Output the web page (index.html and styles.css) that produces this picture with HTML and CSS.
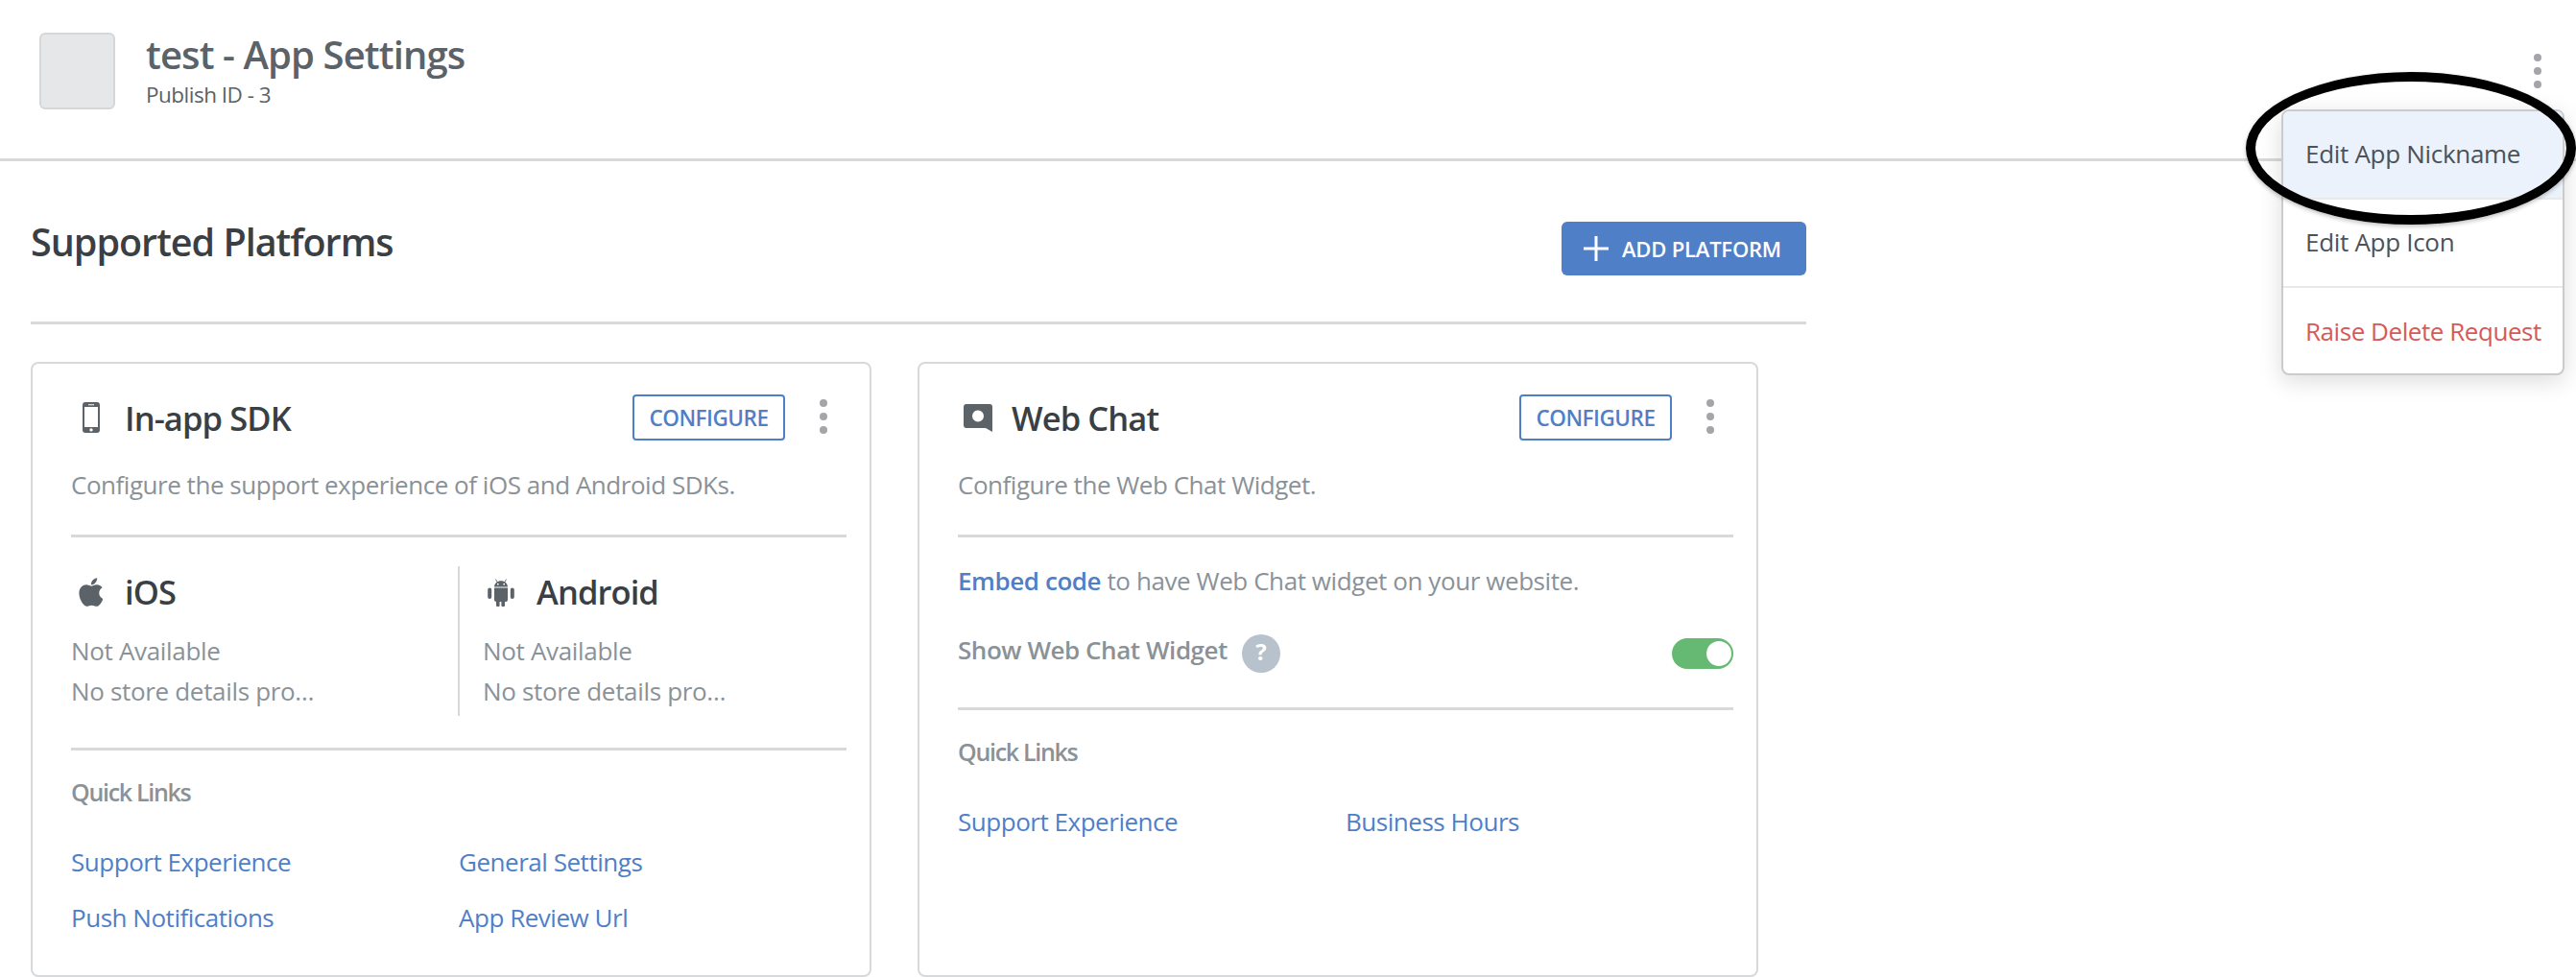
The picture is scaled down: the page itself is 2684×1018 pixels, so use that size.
FILE: index.html
```html
<!DOCTYPE html>
<html lang="en">
<head>
    <meta charset="UTF-8">
    <title>App Settings</title>
    <link rel="stylesheet" href="styles.css">
</head>
<body>
    <header class="page-header">
        <div class="app-icon"></div>
        <div class="app-info">
            <h1>test - App Settings</h1>
            <div class="publish-id">Publish ID - 3</div>
        </div>
        <div class="dots dots-page"><i></i><i></i><i></i></div>
    </header>

    <main class="content">
        <div class="section-head">
            <h2>Supported Platforms</h2>
            <button class="add-button">
                <svg class="plus" viewBox="0 0 26 26"><path d="M13 0v26M0 13h26" stroke="#fff" stroke-width="3" fill="none"/></svg>
                ADD PLATFORM
            </button>
        </div>

        <div class="cards">
            <section class="card">
                <div class="card-head">
                    <svg class="card-icon" viewBox="0 0 18 32"><path fill="#5b6268" fill-rule="evenodd" d="M3 0h12a3 3 0 0 1 3 3v26a3 3 0 0 1-3 3H3a3 3 0 0 1-3-3V3a3 3 0 0 1 3-3zM2 5v21h14V5zM6 2.2v1h6v-1zM9 27.2a1.7 1.7 0 1 0 0 3.4 1.7 1.7 0 0 0 0-3.4z"/></svg>
                    <h3>In-app SDK</h3>
                    <button class="configure">CONFIGURE</button>
                    <div class="dots"><i></i><i></i><i></i></div>
                </div>
                <p class="card-desc">Configure the support experience of iOS and Android SDKs.</p>
                <hr>
                <div class="platforms">
                    <div class="platform">
                        <div class="platform-name">
                            <svg class="os-icon" viewBox="0 30 372 452"><path fill="#5b6268" d="M318.7 268.7c-.2-36.7 16.4-64.4 50-84.8-18.8-26.9-47.2-41.7-84.7-44.6-35.5-2.8-74.3 20.7-88.5 20.7-15 0-49.4-19.7-76.4-19.7C63.3 141.2 4 184.8 4 273.5q0 39.3 14.4 81.2c12.8 36.7 59 126.7 107.2 125.2 25.2-.6 43-17.9 75.8-17.9 31.8 0 48.3 17.9 76.4 17.9 48.6-.7 90.4-82.5 102.6-119.3-65.2-30.7-61.7-90-61.7-91.9zm-56.6-164.2c27.3-32.4 24.8-61.9 24-72.5-24.1 1.4-52 16.4-67.9 34.9-17.5 19.8-27.8 44.3-25.6 71.9 26.1 2 49.9-11.4 69.5-34.3z"/></svg>
                            iOS
                        </div>
                        <div class="muted">Not Available</div>
                        <div class="muted">No store details pro…</div>
                    </div>
                    <div class="platform platform-right">
                        <div class="platform-name">
                            <svg class="os-icon" viewBox="0 0 28 30"><path fill="#5b6268" d="M7 10.5h14V23a2 2 0 0 1-2 2h-1v3.5a1.8 1.8 0 0 1-3.600 0V25h-1.800v3.500a1.800 1.800 0 0 1-3.600 0V25H9a2 2 0 0 1-2-2zM7 9.500C7.200 5.800 10 3.200 14 3.200s6.800 2.600 7 6.300zM10.800 5.800a.9.9 0 1 0 0 1.800.9.900 0 0 0 0-1.800zM17.200 5.800a.9.9 0 1 0 0 1.800.9.900 0 0 0 0-1.800zM2.200 10.500A2 2 0 0 1 4.200 12.500v7.500a2 2 0 0 1-4 0v-7.500a2 2 0 0 1 2-2zM25.800 10.500a2 2 0 0 1 2 2v7.500a2 2 0 0 1-4 0v-7.500a2 2 0 0 1 2-2z"/><path stroke="#5b6268" stroke-width=".8" d="M10 4.500 8.500 1.500M18 4.500l1.500-3"/></svg>
                            Android
                        </div>
                        <div class="muted">Not Available</div>
                        <div class="muted">No store details pro…</div>
                    </div>
                </div>
                <hr>
                <div class="quick-title">Quick Links</div>
                <div class="quick-links">
                    <a href="#">Support Experience</a>
                    <a href="#">General Settings</a>
                    <a href="#">Push Notifications</a>
                    <a href="#">App Review Url</a>
                </div>
            </section>

            <section class="card">
                <div class="card-head">
                    <svg class="card-icon card-icon-chat" viewBox="0 0 30 29"><path fill="#5b6268" fill-rule="evenodd" d="M3 0h24a3 3 0 0 1 3 3v26l-7-4H3a3 3 0 0 1-3-3V3a3 3 0 0 1 3-3zM15 6.500a6 6 0 1 0 0 12 6 6 0 0 0 0-12z"/></svg>
                    <h3>Web Chat</h3>
                    <button class="configure">CONFIGURE</button>
                    <div class="dots"><i></i><i></i><i></i></div>
                </div>
                <p class="card-desc">Configure the Web Chat Widget.</p>
                <hr>
                <p class="embed"><a href="#" class="embed-link">Embed code</a> to have Web Chat widget on your website.</p>
                <div class="widget-row">
                    <span class="widget-label">Show Web Chat Widget</span>
                    <span class="help">?</span>
                    <span class="toggle"></span>
                </div>
                <hr>
                <div class="quick-title">Quick Links</div>
                <div class="quick-links">
                    <a href="#">Support Experience</a>
                    <a href="#">Business Hours</a>
                </div>
            </section>
        </div>
    </main>

    <div class="menu-caret"></div>
    <div class="menu">
        <div class="menu-item menu-item-active">Edit App Nickname</div>
        <div class="menu-item">Edit App Icon</div>
        <div class="menu-item menu-item-danger">Raise Delete Request</div>
    </div>
    <div class="highlight-ring"></div>
</body>
</html>
```

FILE: styles.css
```css
* {
    box-sizing: border-box;
}
html, body {
    height: 1018px;
    overflow: hidden;
}
body {
    margin: 0;
    background-color: #fff;
    font-family: "Open Sans", "Noto Sans", sans-serif;
    color: #3a3f44;
    position: relative;
}
h1, h2, h3, p {
    margin: 0;
}
hr {
    border: none;
    height: 3px;
    margin: 0;
    background-color: #d8d9da;
}

/* page header */
.page-header {
    height: 168px;
    border-bottom: 3px solid #d8d9da;
    padding: 34px 0 0 41px;
    display: flex;
    align-items: flex-start;
}
.app-icon {
    width: 79px;
    height: 80px;
    background-color: #e6e7e9;
    border: 2px solid #d6d7d8;
    border-radius: 6px;
}
.app-info {
    margin-left: 32px;
}
.app-info h1 {
    font-size: 40px;
    line-height: 46px;
    font-weight: 600;
    color: #5b6268;
    letter-spacing: -0.9px;
}
.publish-id {
    font-size: 22.5px;
    line-height: 28px;
    margin-top: 5px;
    color: #5b6268;
    letter-spacing: -0.5px;
}
.dots {
    display: flex;
    flex-direction: column;
    gap: 6px;
    width: 8px;
}
.dots i {
    display: block;
    width: 8px;
    height: 8px;
    border-radius: 50%;
    background-color: #a3a5a8;
}
.dots-page {
    margin-left: auto;
    margin-right: 36px;
    margin-top: 22px;
}

/* platforms section */
.content {
    width: 1850px;
    margin-left: 32px;
}
.section-head {
    height: 170px;
    border-bottom: 3px solid #d8d9da;
    display: flex;
    justify-content: space-between;
    padding-top: 60px;
}
.section-head h2 {
    font-size: 39.5px;
    line-height: 48px;
    font-weight: 600;
    color: #3a3f44;
    letter-spacing: -1px;
}
.add-button {
    width: 255px;
    height: 56px;
    margin-top: 3px;
    background-color: #4f7fc7;
    border: none;
    border-radius: 6px;
    color: #fff;
    font-family: inherit;
    font-size: 22px;
    font-weight: 600;
    letter-spacing: -0.2px;
    display: flex;
    align-items: center;
    padding-left: 23px;
    gap: 14px;
}
.plus {
    width: 26px;
    height: 26px;
}
.cards {
    display: flex;
    gap: 48px;
    margin-top: 39px;
}
.card {
    width: 876px;
    height: 641px;
    border: 2px solid #d8d9da;
    border-radius: 8px;
    padding: 32px 24px 0 40px;
}
.card-head {
    height: 48px;
    display: flex;
    align-items: center;
}
.card-icon {
    width: 18px;
    height: 32px;
    margin-left: 12px;
    margin-right: 26px;
}
.card-icon-chat {
    width: 30px;
    height: 29px;
    margin-left: 6px;
    margin-right: 20px;
}
.card-head h3 {
    font-size: 34.5px;
    font-weight: 600;
    color: #3a3f44;
    letter-spacing: -0.9px;
}
.configure {
    margin-left: auto;
    width: 159px;
    height: 48px;
    background-color: #fff;
    border: 2px solid #4f7fc7;
    border-radius: 4px;
    color: #4f7fc7;
    font-family: inherit;
    font-size: 22.5px;
    font-weight: 600;
    letter-spacing: -0.5px;
    padding: 0;
}
.card-head .dots {
    margin-left: 36px;
    margin-right: 20px;
    margin-top: -2px;
}
.card-desc {
    font-size: 26px;
    line-height: 36px;
    margin-top: 28px;
    margin-bottom: 34px;
    color: #8a9298;
    letter-spacing: -0.47px;
}
.platforms {
    display: flex;
    padding-top: 30px;
    height: 219px;
}
.platform {
    width: 403px;
    height: 156px;
}
.platform-right {
    border-left: 2px solid #d8d9da;
    padding-left: 24px;
}
.platform-name {
    font-size: 34.5px;
    line-height: 42px;
    font-weight: 600;
    color: #3a3f44;
    letter-spacing: -0.9px;
    display: flex;
    align-items: center;
    margin-top: 6px;
    margin-bottom: 19px;
}
.os-icon {
    width: 25px;
    height: 30px;
    margin-left: 8px;
    margin-right: 23px;
}
.platform-right .os-icon {
    width: 28px;
    margin-left: 5px;
    margin-right: 23px;
}
.muted {
    font-size: 26px;
    line-height: 42px;
    color: #8a9298;
    letter-spacing: -0.33px;
}
.quick-title {
    font-size: 25px;
    font-weight: 600;
    line-height: 36px;
    margin-top: 25px;
    color: #8a9298;
    letter-spacing: -1.3px;
}
.quick-links {
    display: grid;
    grid-template-columns: 404px 404px;
    grid-auto-rows: 58px;
    margin-top: 37px;
}
.quick-links a {
    font-size: 26px;
    line-height: 36px;
    color: #4f7fc7;
    text-decoration: none;
    letter-spacing: -0.47px;
}

/* web chat card */
.embed {
    font-size: 26px;
    line-height: 36px;
    margin-top: 27px;
    color: #8a9298;
    letter-spacing: -0.42px;
}
.embed-link {
    color: #4f7fc7;
    font-weight: 600;
    text-decoration: none;
}
.widget-row {
    display: flex;
    align-items: center;
    height: 40px;
    margin-top: 38px;
    margin-bottom: 36px;
}
.widget-label {
    font-size: 26px;
    font-weight: 600;
    color: #8a9298;
    letter-spacing: -0.45px;
    margin-top: -9px;
}
.help {
    width: 40px;
    height: 40px;
    margin-left: 15px;
    border-radius: 50%;
    background-color: #b8c2cc;
    color: #fff;
    font-size: 24px;
    font-weight: 700;
    text-align: center;
    line-height: 36px;
}
.toggle {
    margin-left: auto;
    width: 64px;
    height: 32px;
    border-radius: 16px;
    background-color: #66b973;
    position: relative;
}
.toggle::after {
    content: "";
    position: absolute;
    right: 2px;
    top: 3px;
    width: 26px;
    height: 26px;
    border-radius: 50%;
    background-color: #fff;
}

/* dropdown + annotation */
.menu {
    position: absolute;
    left: 2377px;
    top: 114px;
    width: 295px;
    height: 277px;
    background-color: #fff;
    border: 2px solid #c9cbcd;
    border-radius: 8px;
    box-shadow: 0 6px 24px rgba(0,0,0,0.14);
    overflow: hidden;
}
.menu-caret {
    position: absolute;
    left: 2636px;
    top: 107px;
    width: 16px;
    height: 16px;
    background-color: #fff;
    transform: rotate(45deg);
}
.menu-item {
    height: 92px;
    padding-left: 23px;
    padding-bottom: 2px;
    display: flex;
    align-items: center;
    font-size: 26px;
    color: #4c5258;
    letter-spacing: -0.3px;
    border-bottom: 2px solid #e8e9ea;
}
.menu-item:last-child {
    border-bottom: none;
}
.menu-item-active {
    background-color: #ebf2fc;
}
.menu-item-danger {
    color: #d65a57;
    letter-spacing: -0.45px;
}
.highlight-ring {
    position: absolute;
    left: 2340px;
    top: 75px;
    width: 344px;
    height: 159px;
    border: 10px solid #000;
    border-radius: 50%;
    box-shadow: 0 2px 4px rgba(0,0,0,0.25);
}
```
